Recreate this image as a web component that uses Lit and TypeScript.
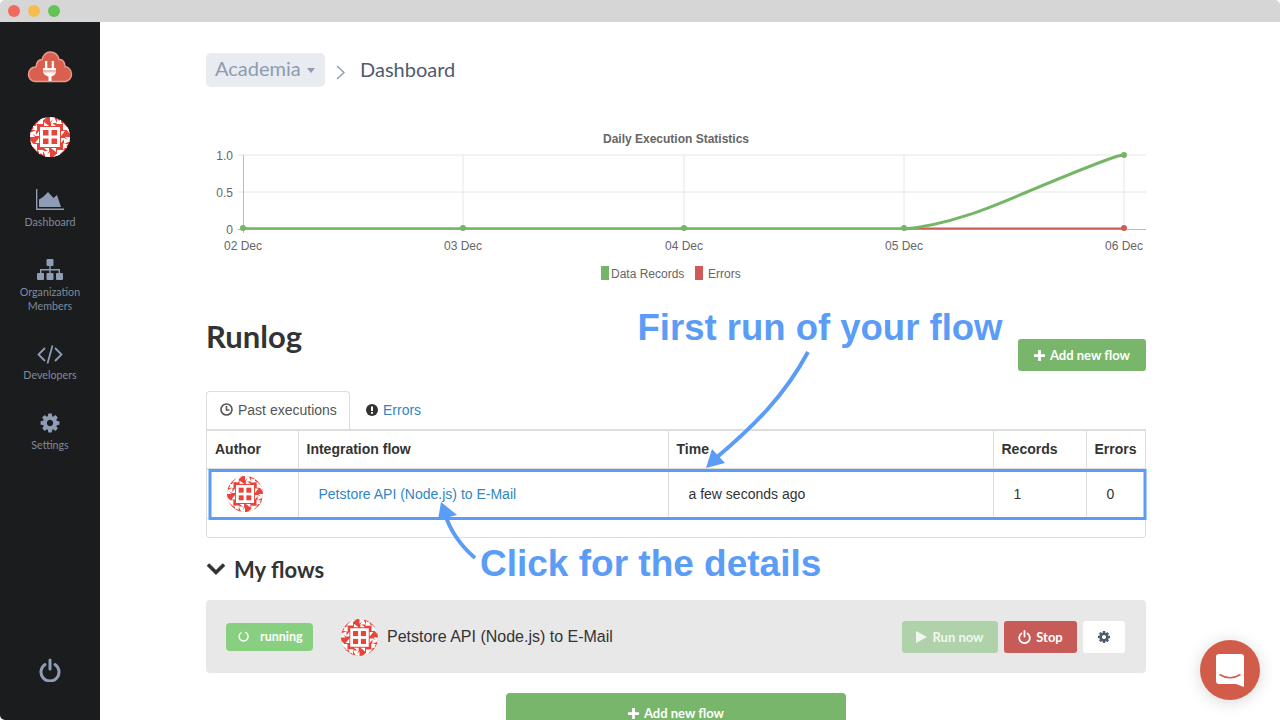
import { LitElement, html, css, svg } from "lit";
import { customElement } from "lit/decorators.js";

const GEAR =
  "M1152 896q0-106-75-181t-181-75-181 75-75 181 75 181 181 75 181-75 75-181zm512-109v222q0 12-8 23t-20 13l-185 28q-19 54-39 91 35 50 107 138 10 12 10 25t-9 23q-27 37-99 108t-94 71q-12 0-26-9l-138-108q-44 23-91 38-16 136-29 186-7 28-36 28h-222q-14 0-24.5-8.5t-11.5-21.5l-28-184q-49-16-90-37l-141 107q-10 9-25 9-14 0-25-11-126-114-165-168-7-10-7-23 0-12 8-23 15-21 51-66.5t54-70.5q-27-50-41-99l-183-27q-13-2-21-12.5t-8-23.5v-222q0-12 8-23t19-13l186-28q14-46 39-92-40-57-107-138-10-12-10-24 0-10 9-23 26-36 98.5-107.5t94.5-71.5q13 0 26 10l138 107q44-23 91-38 16-136 29-186 7-28 36-28h222q14 0 24.5 8.5t11.5 21.5l28 184q49 16 90 37l142-107q9-9 24-9 13 0 25 10 129 119 165 170 7 8 7 22 0 12-8 23-15 21-51 66.5t-54 70.5q26 50 41 98l183 28q13 2 21 12.5t8 23.5z";

// four rotated copies of the same corner make up the avatar
const avatar = (size: number) => html`
  <svg class="avatar" width=${size} height=${size} viewBox="0 0 40 40">
    <clipPath id="av"><circle cx="20" cy="20" r="20"></circle></clipPath>
    <g clip-path="url(#av)">
      <rect width="40" height="40" fill="#e8443a"></rect>
      ${[0, 90, 180, 270].map(
        (r) => svg`<g transform="rotate(${r} 20 20)" fill="#fff">
          <path d="M20 0h6l-6 5zM10 0h7l-7 6zM27 2l6 5h-6zM2 9l5 0 0 5zM14 5l5 4h-5zM0 16l6 -3v6zM21 5l5 4h-5zM33 6l7 7h-7z"></path>
        </g>`
      )}
      <rect x="10" y="10" width="20" height="20" fill="#fff"></rect>
      <rect x="13" y="13" width="5.500" height="5.500" fill="#e8443a"></rect>
      <rect x="21.500" y="13" width="5.500" height="5.500" fill="#e8443a"></rect>
      <rect x="13" y="21.500" width="5.500" height="5.500" fill="#e8443a"></rect>
      <rect x="21.500" y="21.500" width="5.500" height="5.500" fill="#e8443a"></rect>
    </g>
  </svg>
`;

@customElement("app-root")
export class AppRoot extends LitElement {
  static styles = css`
    :host {
      display: block;
      width: 1280px;
      height: 720px;
      background: #fff;
      font-family: "Liberation Sans", Arial, sans-serif;
    }
    .window {
      position: relative;
      height: 720px;
      border-radius: 5px;
      overflow: hidden;
      display: flex;
      flex-direction: column;
    }
    .titlebar {
      flex: none;
      height: 22px;
      background: #d6d6d6;
      display: flex;
      align-items: center;
      gap: 8px;
      padding-left: 8px;
    }
    .dot {
      width: 12px;
      height: 12px;
      border-radius: 50%;
    }
    .dot.close {
      background: #ee6a5f;
    }
    .dot.min {
      background: #f5bd4f;
    }
    .dot.max {
      background: #61c454;
    }
    .body {
      flex: 1;
      display: flex;
      min-height: 0;
    }
    .sidebar {
      flex: none;
      width: 100px;
      background: #1a1c1e;
      color: #7f8b9c;
      display: flex;
      flex-direction: column;
      align-items: center;
      font-family: "Lato", "Noto Sans", sans-serif;
      font-size: 10.7px;
      line-height: 14px;
      text-align: center;
      padding-top: 28px;
      box-sizing: border-box;
    }
    .sidebar .logo {
      display: block;
      height: 36px;
    }
    .sidebar .avatar {
      margin-top: 31px;
      display: block;
    }
    .nav {
      display: flex;
      flex-direction: column;
      align-items: center;
      height: 70px;
    }
    .nav svg {
      display: block;
      margin-bottom: 4px;
    }
    .nav.first {
      margin-top: 32px;
    }
    .nav.dev {
      height: 79px;
      padding-top: 16px;
      box-sizing: border-box;
    }
    .nav.settings {
      padding-top: 4px;
    }
    .power {
      margin-top: auto;
      margin-bottom: 38px;
      display: block;
    }
    .main {
      flex: 1;
      padding: 31px 0 0 106px;
      overflow: hidden;
    }
    .content {
      width: 940px;
    }
    .crumbs {
      display: flex;
      align-items: center;
      height: 34px;
      font-family: "Lato", "Noto Sans", sans-serif;
      font-size: 20px;
      line-height: 30px;
    }
    .org {
      width: 119px;
      height: 34px;
      box-sizing: border-box;
      padding: 0 0 5px 9px;
      background: #e8ebf0;
      border-radius: 5px;
      color: #8e9bb0;
      display: flex;
      align-items: center;
      gap: 6px;
    }
    .caret {
      width: 0;
      height: 0;
      margin-top: 5px;
      border: 4.500px solid transparent;
      border-top: 5px solid #8e9bb0;
      border-bottom: 0;
    }
    .sep {
      margin: 4px 15px 0 11px;
      display: block;
    }
    .here {
      color: #4f5b6e;
      padding-bottom: 3px;
    }
    .chart {
      display: block;
      margin-top: 38px;
    }
    .chart text {
      font-family: "Liberation Sans", Arial, sans-serif;
      font-size: 12px;
      fill: #666;
    }
    .chart .title {
      font-weight: bold;
    }
    .head {
      margin-top: 34px;
      height: 52px;
      display: flex;
      justify-content: space-between;
      align-items: flex-start;
    }
    h1 {
      margin: -1px 0 0;
      font-family: "Lato", "Noto Sans", sans-serif;
      font-size: 31px;
      line-height: 36px;
      font-weight: 700;
      color: #333;
    }
    .btn {
      display: flex;
      align-items: center;
      justify-content: center;
      gap: 5px;
      height: 32px;
      box-sizing: border-box;
      border-radius: 3px;
      color: #fff;
      font-family: "Lato", "Noto Sans", sans-serif;
      font-size: 13px;
      font-weight: 700;
    }
    .green {
      background: #77b66b;
    }
    .add {
      width: 128px;
      margin-top: 20px;
    }
    .tabs {
      margin-top: 20px;
      height: 38px;
      display: flex;
      font-size: 14px;
      white-space: nowrap;
    }
    .tab {
      display: flex;
      align-items: center;
      gap: 5px;
      box-sizing: border-box;
      padding: 0 0 0 13px;
      height: 38px;
    }
    .tab.active {
      width: 144px;
      padding-bottom: 2px;
      background: #fff;
      color: #555;
      border: 1px solid #ddd;
      border-bottom: 0;
      border-radius: 4px 4px 0 0;
    }
    .tab.link {
      padding-left: 16px;
      color: #2f86c5;
    }
    .tablewrap {
      height: 109px;
      box-sizing: border-box;
      border: 1px solid #ddd;
      border-top: 2px solid #ddd;
      border-radius: 0 0 4px 4px;
    }
    table {
      border-collapse: collapse;
      table-layout: fixed;
      width: 100%;
      font-size: 14px;
      color: #333;
    }
    .c-author {
      width: 91px;
    }
    .c-flow {
      width: 370px;
    }
    .c-time {
      width: 325px;
    }
    .c-records {
      width: 93px;
    }
    th {
      height: 38px;
      padding: 0 8px 2px;
      text-align: left;
      border-right: 1px solid #ddd;
      border-bottom: 2px solid #ddd;
      box-sizing: border-box;
    }
    td {
      height: 49px;
      padding: 0 8px 0 20px;
      border-right: 1px solid #ddd;
      border-bottom: 1px solid #ddd;
      box-sizing: border-box;
    }
    th:last-child,
    td:last-child {
      border-right: 0;
    }
    td.author {
      padding: 0 0 0 20px;
    }
    td.author .avatar {
      display: block;
    }
    a {
      color: #2f86c5;
    }
    h2 {
      margin: 17px 0 17px;
      height: 28px;
      display: flex;
      align-items: center;
      gap: 8px;
      font-family: "Lato", "Noto Sans", sans-serif;
      font-size: 22px;
      font-weight: 700;
      color: #333;
    }
    .flow {
      height: 73px;
      box-sizing: border-box;
      padding: 0 21px 0 20px;
      background: #e8e8e8;
      border-radius: 4px;
      display: flex;
      align-items: center;
    }
    .badge {
      width: 87px;
      height: 28px;
      box-sizing: border-box;
      padding-left: 12px;
      background: #88d07f;
      border-radius: 4px;
      color: #fff;
      display: flex;
      align-items: center;
      gap: 11px;
      font-family: "Lato", "Noto Sans", sans-serif;
      font-size: 12.500px;
      font-weight: 700;
    }
    .flow .avatar {
      margin: 2px 0 0 28px;
    }
    .name {
      margin-left: 9px;
      font-size: 16px;
      color: #333;
      flex: 1;
    }
    .actions {
      display: flex;
      gap: 6px;
    }
    .run {
      width: 96px;
      background: #b0d2ab;
      color: #f1f7f0;
    }
    .stop {
      width: 73px;
      background: #c75b57;
    }
    .cog {
      width: 42px;
      background: #fff;
    }
    .bottom {
      width: 340px;
      height: 40px;
      margin: 20px auto 0;
      border-radius: 4px 4px 0 0;
    }
    .marks {
      position: absolute;
      left: 0;
      top: 0;
      pointer-events: none;
    }
    .marks text {
      font-family: "Liberation Sans", Arial, sans-serif;
      font-weight: bold;
      fill: #5b9cf6;
    }
    .marks .first-run {
      font-size: 36.500px;
    }
    .marks .details {
      font-size: 37px;
    }
    .chat {
      position: absolute;
      left: 1200px;
      top: 640px;
      width: 60px;
      height: 60px;
      border-radius: 50%;
      background: #d25c4a;
      box-shadow: 0 2px 16px rgba(0, 0, 0, 0.16);
      display: flex;
      align-items: center;
      justify-content: center;
    }
  `;

  renderChart() {
    const xs = [37, 257, 478, 698, 918];
    const days = ["02 Dec", "03 Dec", "04 Dec", "05 Dec", "06 Dec"];
    return html`
      <svg class="chart" width="940" height="160" viewBox="0 0 940 160">
        <text class="title" x="470" y="18" text-anchor="middle">Daily Execution Statistics</text>
        ${[30, 67].map((y) => svg`<line x1="32" x2="940" y1=${y} y2=${y} stroke="#e6e6e6"></line>`)}
        ${xs.slice(1).map((x) => svg`<line x1=${x} x2=${x} y1="30" y2="104" stroke="#e6e6e6"></line>`)}
        <line x1="37.500" x2="37.500" y1="30" y2="108" stroke="#bbb"></line>
        <line x1="32" x2="940" y1="104.500" y2="104.500" stroke="#bbb"></line>
        <text x="27" y="35" text-anchor="end">1.0</text>
        <text x="27" y="72" text-anchor="end">0.5</text>
        <text x="27" y="109" text-anchor="end">0</text>
        ${xs.map((x, i) => svg`<text x=${x} y="125" text-anchor="middle">${days[i]}</text>`)}
        <line x1="698" x2="918" y1="103.500" y2="103.500" stroke="#cf5b56" stroke-width="2"></line>
        <circle cx="918" cy="103" r="3" fill="#cf5b56"></circle>
        <path d="M37 103.500H698" fill="none" stroke="#74b566" stroke-width="2.400"></path>
        <path d="M698 104C745 100 790 80 821 67S890 38 912 31L918 30" fill="none" stroke="#74b566" stroke-width="3"></path>
        ${xs.slice(0, 4).map((x) => svg`<circle cx=${x} cy="103" r="3" fill="#74b566"></circle>`)}
        <circle cx="918" cy="30" r="3" fill="#74b566"></circle>
        <rect x="395" y="141" width="8" height="14" fill="#74b566"></rect>
        <text x="405" y="153">Data Records</text>
        <rect x="489" y="141" width="8" height="14" fill="#cf5b56"></rect>
        <text x="502" y="153">Errors</text>
      </svg>
    `;
  }

  render() {
    const icon = "#8e9db5";
    return html`
      <div class="window">
        <div class="titlebar">
          <span class="dot close"></span>
          <span class="dot min"></span>
          <span class="dot max"></span>
        </div>
        <div class="body">
          <nav class="sidebar">
            <svg class="logo" width="46" height="36" viewBox="0 0 46 36">
              <path d="M8 31.500C4 31.500 1.500 28 1.500 24.500C1.500 20 5 16.500 9 17C9.500 12 12 9.500 15 9.500C16.500 5 19.500 2 23 2C27.500 2 31 5 32 9.500C36 9 38 13 38 16.500C42 17 44.500 20.500 44.500 24.500C44.500 28 41.500 31.500 38 31.500Z" fill="#d9604f" stroke="#eb9a8c" stroke-width="1.500"></path>
              <path d="M18 11h2.300v7h4.400v-7H27v7h2v3c0 3-2 5-4.500 5.500V31h-3v-4.500C19 26 16 24 16 21v-3h2z" fill="#fff"></path>
              <rect x="16" y="20" width="13" height="2.500" fill="#f3b7ad"></rect>
            </svg>
            ${avatar(40)}
            <div class="nav first">
              <svg width="30" height="22" viewBox="0 0 30 22" fill=${icon}>
                <path d="M1 0h1.400v19.500H29V21H1z"></path>
                <path d="M4 18V10.500L8 8l5-5 5.500 6 3.500-3 4 12z"></path>
              </svg>
              Dashboard
            </div>
            <div class="nav">
              <svg width="26" height="22" viewBox="0 0 26 22" fill=${icon}>
                <rect x="9.500" y="0" width="7" height="7" rx="1"></rect>
                <rect x="0" y="14" width="7" height="7" rx="1"></rect>
                <rect x="9.500" y="14" width="7" height="7" rx="1"></rect>
                <rect x="19" y="14" width="7" height="7" rx="1"></rect>
                <path d="M12.300 7h1.400v3H23v4h-1.400v-2.600h-7.900V14h-1.400v-2.600H4.400V14H3v-4h9.300z"></path>
              </svg>
              Organization<br />Members
            </div>
            <div class="nav dev">
              <svg width="26" height="19" viewBox="0 0 26 19" fill="none" stroke=${icon} stroke-width="1.800">
                <path d="M8 3L1.500 9.500L8 16M18 3L24.500 9.500L18 16M15.500 0.500L10.500 18.500"></path>
              </svg>
              Developers
            </div>
            <div class="nav settings">
              <svg width="22" height="22" viewBox="0 0 1792 1792" fill=${icon}><path d=${GEAR}></path></svg>
              Settings
            </div>
            <svg class="power" width="22" height="24" viewBox="0 0 22 24" fill="none" stroke=${icon} stroke-width="3" stroke-linecap="round">
              <path d="M6 6.500a9 9 0 1 0 10 0M11 2v9"></path>
            </svg>
          </nav>
          <main class="main">
            <div class="content">
              <div class="crumbs">
                <div class="org">Academia<span class="caret"></span></div>
                <svg class="sep" width="9" height="15" viewBox="0 0 9 15" fill="none" stroke="#8e9bb0" stroke-width="1.400"><path d="M1 1l7 6.500L1 14"></path></svg>
                <span class="here">Dashboard</span>
              </div>
              ${this.renderChart()}
              <div class="head">
                <h1>Runlog</h1>
                <div class="btn green add">
                  <svg width="11" height="11" viewBox="0 0 12 12" fill="#fff"><path d="M4.500 0h3v4.500H12v3H7.500V12h-3V7.500H0v-3h4.500z"></path></svg>
                  Add new flow
                </div>
              </div>
              <div class="tabs">
                <div class="tab active">
                  <svg width="13" height="13" viewBox="0 0 13 13" fill="none" stroke="#555" stroke-width="1.600"><circle cx="6.500" cy="6.500" r="5.500"></circle><path d="M6.500 3v4H9.500"></path></svg>
                  Past executions
                </div>
                <div class="tab link">
                  <svg width="12" height="12" viewBox="0 0 12 12"><circle cx="6" cy="6" r="6" fill="#333"></circle><rect x="5" y="2.500" width="2" height="4.500" fill="#fff"></rect><rect x="5" y="8" width="2" height="1.800" fill="#fff"></rect></svg>
                  Errors
                </div>
              </div>
              <div class="tablewrap">
                <table>
                  <colgroup>
                    <col class="c-author" /><col class="c-flow" /><col class="c-time" /><col class="c-records" /><col />
                  </colgroup>
                  <thead>
                    <tr><th>Author</th><th>Integration flow</th><th>Time</th><th>Records</th><th>Errors</th></tr>
                  </thead>
                  <tbody>
                    <tr>
                      <td class="author">${avatar(36)}</td>
                      <td><a>Petstore API (Node.js) to E-Mail</a></td>
                      <td>a few seconds ago</td>
                      <td>1</td>
                      <td>0</td>
                    </tr>
                  </tbody>
                </table>
              </div>
              <h2>
                <svg width="20" height="14" viewBox="0 0 20 14" fill="none" stroke="#333" stroke-width="3.600"><path d="M2 2.500l8 8 8-8"></path></svg>
                My flows
              </h2>
              <div class="flow">
                <div class="badge">
                  <svg width="11" height="11" viewBox="0 0 11 11" fill="none" stroke="#fff" stroke-width="1.400"><path d="M7 1.200A4.500 4.500 0 1 1 3.500 1.500"></path></svg>
                  running
                </div>
                ${avatar(37)}
                <div class="name">Petstore API (Node.js) to E-Mail</div>
                <div class="actions">
                  <div class="btn run">
                    <svg width="11" height="12" viewBox="0 0 11 12" fill="#f1f7f0"><path d="M0 0l11 6-11 6z"></path></svg>
                    Run now
                  </div>
                  <div class="btn stop">
                    <svg width="13" height="14" viewBox="0 0 13 14" fill="none" stroke="#fff" stroke-width="1.800" stroke-linecap="round"><path d="M3.500 3.500a5.300 5.300 0 1 0 6 0M6.500 1v5.500"></path></svg>
                    Stop
                  </div>
                  <div class="btn cog">
                    <svg width="14" height="14" viewBox="0 0 1792 1792" fill="#4f5b6e"><path d=${GEAR}></path></svg>
                  </div>
                </div>
              </div>
              <div class="btn green bottom">
                <svg width="11" height="11" viewBox="0 0 12 12" fill="#fff"><path d="M4.500 0h3v4.500H12v3H7.500V12h-3V7.500H0v-3h4.500z"></path></svg>
                Add new flow
              </div>
            </div>
          </main>
        </div>
        <svg class="marks" width="1280" height="720" viewBox="0 0 1280 720">
          <rect x="210" y="470.500" width="935" height="48" fill="none" stroke="#5b9cf6" stroke-width="3"></rect>
          <text class="first-run" x="637.500" y="340">First run of your flow</text>
          <text class="details" x="480" y="576">Click for the details</text>
          <path d="M808 352C785 395 755 425 716 458" fill="none" stroke="#5b9cf6" stroke-width="4"></path>
          <path d="M706 468L712 449L725 463Z" fill="#5b9cf6"></path>
          <path d="M475 558C460 545 450 530 445 514" fill="none" stroke="#5b9cf6" stroke-width="4"></path>
          <path d="M441 502L438 520L457 515Z" fill="#5b9cf6"></path>
        </svg>
        <div class="chat">
          <svg width="28" height="33" viewBox="0 0 28 33">
            <path d="M3 0h22a3 3 0 0 1 3 3v30l-8-3H3a3 3 0 0 1-3-3V3a3 3 0 0 1 3-3z" fill="#fff"></path>
            <path d="M3.500 20.500C10 24.500 18 24.500 24.500 20.500" fill="none" stroke="#d25c4a" stroke-width="1.500"></path>
          </svg>
        </div>
      </div>
    `;
  }
}
